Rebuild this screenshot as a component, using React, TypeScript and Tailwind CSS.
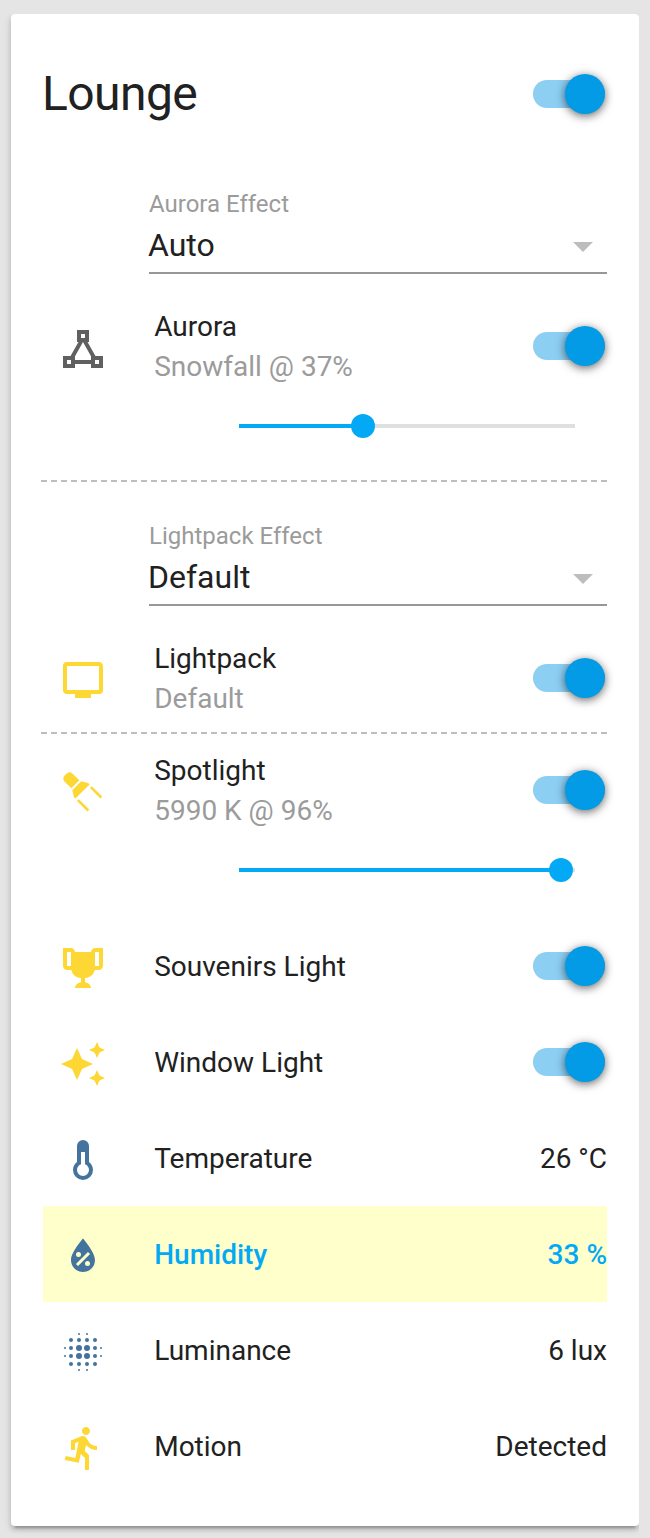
import type { ReactNode } from "react";

const icons = {
  triangle:
    "M9,3V9H9.73L5.79,16H2V22H8V20H16V22H22V16H18.21L14.27,9H15V3M11,5H13V7H11M12,9.04L16,16.15V18H8V16.15M4,18H6V20H4M18,18H20V20H18",
  television:
    "M20,17H4V5H20M20,3H4A2,2 0 0,0 2,5V17A2,2 0 0,0 4,19H8V21H16V19H20A2,2 0 0,0 22,17V5C22,3.89 21.1,3 20,3Z",
  spotlight:
    "M9,16.5L9.91,15.59L15.13,20.8L14.21,21.71L9,16.5M15.5,10L16.41,9.09L21.63,14.29L20.71,15.21L15.5,10M6.72,2.72L10.15,6.15L6.15,10.15L2.72,6.72C1.94,5.94 1.94,4.67 2.72,3.89L3.89,2.72C4.67,1.94 5.94,1.94 6.72,2.72M14.57,7.5L15.28,8.21L8.21,15.28L7.5,14.57L6.64,11.07L11.07,6.64L14.57,7.5Z",
  trophy:
    "M20.2,2H19.5H18C17.1,2 16,3 16,4H8C8,3 6.9,2 6,2H4.5H3.8H2V11C2,12 3,13 4,13H6.2C6.6,15 7.9,16.7 11,17V19.08C8,19.54 8,22 8,22H16C16,22 16,19.54 13,19.08V17C16.1,16.7 17.4,15 17.8,13H20C21,13 22,12 22,11V2H20.2M4,11V4H6V6V11C5.1,11 4.3,11 4,11M20,11C19.7,11 18.9,11 18,11V6V4H20V11Z",
  sparkles:
    "M19,1L17.74,3.75L15,5L17.74,6.26L19,9L20.25,6.26L23,5L20.25,3.75M9,4L6.5,9.5L1,12L6.5,14.5L9,20L11.5,14.5L17,12L11.5,9.5M19,15L17.74,17.74L15,19L17.74,20.25L19,23L20.25,20.25L23,19L20.25,17.74",
  thermometer:
    "M17,17A5,5 0 0,1 12,22A5,5 0 0,1 7,17C7,15.36 7.79,13.91 9,13V5A3,3 0 0,1 12,2A3,3 0 0,1 15,5V13C16.21,13.91 17,15.36 17,17M11,8V14.17C9.83,14.58 9,15.69 9,17A3,3 0 0,0 12,20A3,3 0 0,0 15,17C15,15.69 14.17,14.58 13,14.17V8H11Z",
  humidity:
    "M12,3.25C12,3.25 6,10 6,14C6,17.32 8.69,20 12,20A6,6 0 0,0 18,14C18,10 12,3.25 12,3.25M14.47,9.97L15.53,11.03L9.53,17.03L8.47,15.97M9.75,10A1.25,1.25 0 0,1 11,11.25A1.25,1.25 0 0,1 9.75,12.5A1.25,1.25 0 0,1 8.5,11.25A1.25,1.25 0 0,1 9.75,10M14.25,14.5A1.25,1.25 0 0,1 15.5,15.75A1.25,1.25 0 0,1 14.25,17A1.25,1.25 0 0,1 13,15.75A1.25,1.25 0 0,1 14.25,14.5Z",
  run: "M13.49,5.48C14.59,5.48 15.49,4.58 15.49,3.48C15.49,2.38 14.59,1.48 13.49,1.48C12.39,1.48 11.49,2.38 11.49,3.48C11.49,4.58 12.39,5.48 13.49,5.48M9.89,19.38L10.89,14.98L12.99,16.98V22.98H14.99V15.48L12.89,13.48L13.49,10.48C14.79,11.98 16.79,12.98 18.99,12.98V10.98C17.09,10.98 15.49,9.98 14.69,8.58L13.69,6.98C13.29,6.38 12.69,5.98 11.99,5.98C11.69,5.98 11.49,6.08 11.19,6.08L5.99,8.28V12.98H7.99V9.58L9.79,8.88L8.19,16.98L3.29,15.98L2.89,17.98L9.89,19.38Z",
};

function Icon({ name, color }: { name: keyof typeof icons; color: string }) {
  return (
    <svg viewBox="0 0 24 24" className={`size-12 fill-current ${color}`}>
      <path d={icons[name]} />
    </svg>
  );
}

const blurDots: [number, number, number][] = [];
for (const x of [6, 10, 14, 18]) {
  for (const y of [6, 10, 14, 18]) {
    const central = (x === 10 || x === 14) && (y === 10 || y === 14);
    blurDots.push([x, y, central ? 1.5 : 1]);
  }
}
for (const edge of [3, 21]) {
  for (const mid of [10, 14]) {
    blurDots.push([edge, mid, 0.5], [mid, edge, 0.5]);
  }
}

function BlurIcon() {
  return (
    <svg viewBox="0 0 24 24" className="size-12 fill-current text-[#44739e]">
      {blurDots.map(([x, y, r]) => (
        <circle key={`${x}-${y}`} cx={x} cy={y} r={r} />
      ))}
    </svg>
  );
}

function Toggle() {
  return (
    <button
      type="button"
      role="switch"
      aria-checked="true"
      className="mr-0.5 flex h-10 w-[72px] shrink-0 items-center"
    >
      <span className="flex h-7 w-full items-center justify-end rounded-full bg-[#8dcef3]">
        <span className="size-10 shrink-0 rounded-full bg-[#039be5] shadow-[0_2px_10px_rgba(0,0,0,0.6)]" />
      </span>
    </button>
  );
}

function Select({ label, value }: { label: string; value: string }) {
  return (
    <div className="ml-[106px] flex h-[86px] flex-col border-b-2 border-[#979797]">
      <div className="h-8 text-2xl leading-8 text-[#9b9b9b]">{label}</div>
      <div className="mt-px flex h-12 items-center justify-between pr-3.5">
        <span className="-ml-px text-[32px] leading-12">{value}</span>
        <svg viewBox="0 0 20 10" className="mt-1 h-2.5 w-5 fill-[#bdbdbd]">
          <path d="M0 0H20L10 10Z" />
        </svg>
      </div>
    </div>
  );
}

function Slider({ value }: { value: number }) {
  return (
    <div className="flex h-20 items-center pr-8 pl-[196px]">
      <div className="flex h-1 flex-1 items-center bg-[#e0e0e0]">
        <div className="h-1 bg-[#03a9f4]" style={{ width: `${value}%` }} />
        <div className="-mx-3 size-6 shrink-0 rounded-full bg-[#03a9f4]" />
      </div>
    </div>
  );
}

function Divider() {
  return (
    <div className="-ml-0.5 h-0.5 bg-[repeating-linear-gradient(90deg,#bdbdbd_0_6px,transparent_6px_10px)]" />
  );
}

function Row({
  icon,
  name,
  detail,
  children,
  highlight = false,
}: {
  icon: ReactNode;
  name: string;
  detail?: string;
  children: ReactNode;
  highlight?: boolean;
}) {
  return (
    <div
      className={`flex items-center text-[28px] leading-10 ${detail ? "h-20" : "h-24"} ${
        highlight ? "bg-[#ffffcc] font-medium text-[#03a9f4]" : ""
      }`}
    >
      <div className="mt-1 ml-4 shrink-0">{icon}</div>
      <div className="mt-0.5 ml-[47.2px] flex-1">
        <div>{name}</div>
        {detail && <div className="text-[#9b9b9b]">{detail}</div>}
      </div>
      {children}
    </div>
  );
}

function Reading({ children }: { children: ReactNode }) {
  return <div className="mt-0.5">{children}</div>;
}

export default function App() {
  return (
    <div className="h-[1538px] bg-[#e5e5e5] pt-3.5 pr-[11px] pl-[11px] font-['Roboto',sans-serif] text-[#212121]">
      <main className="h-[1512px] rounded bg-white px-8 shadow-[0_4px_4px_rgba(0,0,0,0.14),0_2px_10px_rgba(0,0,0,0.12),0_6px_2px_-4px_rgba(0,0,0,0.2)] [clip-path:inset(0_0_-12px_-11px)]">
        <header className="flex h-40 items-center justify-between">
          <h1 className="-ml-px text-5xl tracking-[-0.012em]">Lounge</h1>
          <Toggle />
        </header>

        <section className="flex flex-col pt-3.5">
          <Select label="Aurora Effect" value="Auto" />
          <div className="h-8" />
          <Row
            icon={<Icon name="triangle" color="text-[#606060]" />}
            name="Aurora"
            detail="Snowfall @ 37%"
          >
            <Toggle />
          </Row>
          <Slider value={37} />
        </section>

        <section className="pt-3.5">
          <Divider />
          <div className="pt-[38px] pb-8">
            <Select label="Lightpack Effect" value="Default" />
          </div>
          <Row
            icon={<Icon name="television" color="text-[#fdd835]" />}
            name="Lightpack"
            detail="Default"
          >
            <Toggle />
          </Row>
        </section>

        <section className="pt-3.5">
          <Divider />
          <div className="pt-4 pb-2">
            <Row
              icon={<Icon name="spotlight" color="text-[#fdd835]" />}
              name="Spotlight"
              detail="5990 K @ 96%"
            >
              <Toggle />
            </Row>
            <Slider value={95.8} />
          </div>
          <Row icon={<Icon name="trophy" color="text-[#fdd835]" />} name="Souvenirs Light">
            <Toggle />
          </Row>
          <Row icon={<Icon name="sparkles" color="text-[#fdd835]" />} name="Window Light">
            <Toggle />
          </Row>
          <Row icon={<Icon name="thermometer" color="text-[#44739e]" />} name="Temperature">
            <Reading>26 °C</Reading>
          </Row>
          <Row icon={<Icon name="humidity" color="text-[#44739e]" />} name="Humidity" highlight>
            <Reading>33 %</Reading>
          </Row>
          <Row icon={<BlurIcon />} name="Luminance">
            <Reading>6 lux</Reading>
          </Row>
          <Row icon={<Icon name="run" color="text-[#fdd835]" />} name="Motion">
            <Reading>Detected</Reading>
          </Row>
        </section>
      </main>
    </div>
  );
}
